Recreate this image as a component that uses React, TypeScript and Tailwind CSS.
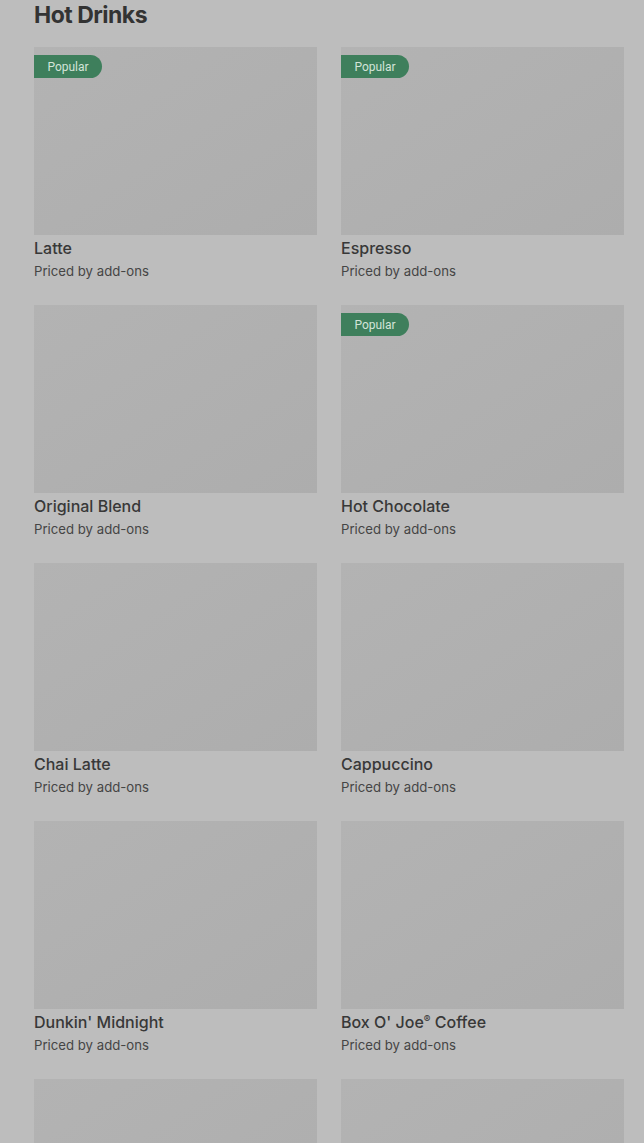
const drinks = [
  { name: 'Latte', popular: true },
  { name: 'Espresso', popular: true },
  { name: 'Original Blend', popular: false },
  { name: 'Hot Chocolate', popular: true },
  { name: 'Chai Latte', popular: false },
  { name: 'Cappuccino', popular: false },
  { name: "Dunkin' Midnight", popular: false },
  { name: "Box O' Joe", reg: true, popular: false },
];

function Card({ name, reg, popular }: { name?: string; reg?: boolean; popular?: boolean }) {
  return (
    <div>
      <div className="relative h-[188px] bg-gradient-to-br from-[#b3b3b3] to-[#adadad]">
        {popular && (
          <span className="absolute left-0 top-[8px] flex h-[23px] w-[68px] items-center justify-center rounded-r-full bg-[#3e7f5c] font-['Roboto',sans-serif] text-[12px] text-[#d3e4d9]">
            Popular
          </span>
        )}
      </div>
      {name && (
        <>
          <div className="mt-[3px] h-[20px] text-[16px] leading-[20px] font-medium text-[#383838]">
            {name}
            {reg && (
              <>
                <span className="relative -top-[5px] text-[10px] leading-[0]">®</span> Coffee
              </>
            )}
          </div>
          <div className="mt-[3px] text-[13.2px] leading-[20px] text-[#454545]">Priced by add-ons</div>
        </>
      )}
    </div>
  );
}

export default function App() {
  return (
    <div className="h-[1143px] overflow-hidden bg-[#bdbdbd] pl-[34px] pr-[20px] font-['Inter',sans-serif]">
      <h2 className="h-[30px] text-[23px] leading-[30px] font-bold tracking-[-0.5px] text-[#333333]">Hot Drinks</h2>
      <div className="mt-[17px] grid grid-cols-2 gap-x-6 gap-y-6">
        {drinks.map((d) => (
          <Card key={d.name} name={d.name} reg={d.reg} popular={d.popular} />
        ))}
        <Card />
        <Card />
      </div>
    </div>
  );
}
